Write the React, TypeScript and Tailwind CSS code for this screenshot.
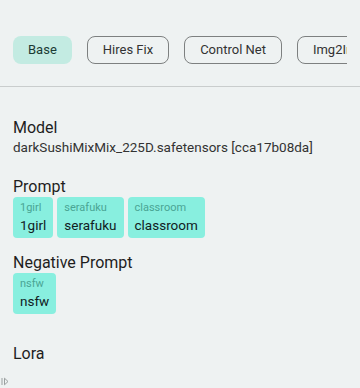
const tabs = ["Base", "Hires Fix", "Control Net", "Img2Img"];

const prompt = ["1girl", "serafuku", "classroom"];
const negative = ["nsfw"];

function Chip({ text }: { text: string }) {
  return (
    <div className="flex flex-col rounded-[4px] bg-[#88efdf] px-[7px] pt-[3px] pb-[3px]">
      <span className="text-[11px] leading-[15px] text-[#4aa594]">{text}</span>
      <span className="text-[13.5px] leading-[20px] text-[#11211e]">{text}</span>
    </div>
  );
}

export default function App() {
  return (
    <div
      className="relative h-[388px] w-[360px] overflow-hidden bg-[#eef2f2] text-[#1e1e1e]"
      style={{ fontFamily: 'Roboto, "Noto Sans", sans-serif' }}
    >
      <div className="border-b border-[#c9cdcd] pt-[36px] pb-[22px]">
        <div className="mr-[13px] flex gap-[15px] overflow-hidden pl-[13px]">
          {tabs.map((t, i) => (
            <div
              key={t}
              className={`flex h-[28px] shrink-0 items-center rounded-[8px] px-[15px] text-[13px] ${
                i === 0
                  ? "bg-[#c3ebe2] text-[#1b3b34]"
                  : "border border-[#7d8080] text-[#333]"
              }`}
            >
              {t}
            </div>
          ))}
        </div>
      </div>

      <div className="px-[13px] pt-[31px]">
        <div className="text-[16px] leading-[20px]">Model</div>
        <div className="text-[13.5px] leading-[18px] text-[#333]">
          darkSushiMixMix_225D.safetensors [cca17b08da]
        </div>

        <div className="mt-[21px] text-[16px] leading-[20px]">Prompt</div>
        <div className="flex flex-wrap gap-[4px]">
          {prompt.map((p) => (
            <Chip key={p} text={p} />
          ))}
        </div>

        <div className="mt-[15px] text-[16px] leading-[20px]">Negative Prompt</div>
        <div className="flex flex-wrap gap-[4px]">
          {negative.map((p) => (
            <Chip key={p} text={p} />
          ))}
        </div>

        <div className="mt-[30px] text-[16px] leading-[20px]">Lora</div>
      </div>

      <svg
        className="absolute left-[1px] top-[377px]"
        width="8"
        height="9"
        viewBox="0 0 8 9"
        fill="none"
        stroke="#9aa0a0"
        strokeWidth="1"
      >
        <path d="M1 1v7" />
        <path d="M3.5 1.2l3.5 3.3-3.5 3.3z" />
      </svg>
    </div>
  );
}
